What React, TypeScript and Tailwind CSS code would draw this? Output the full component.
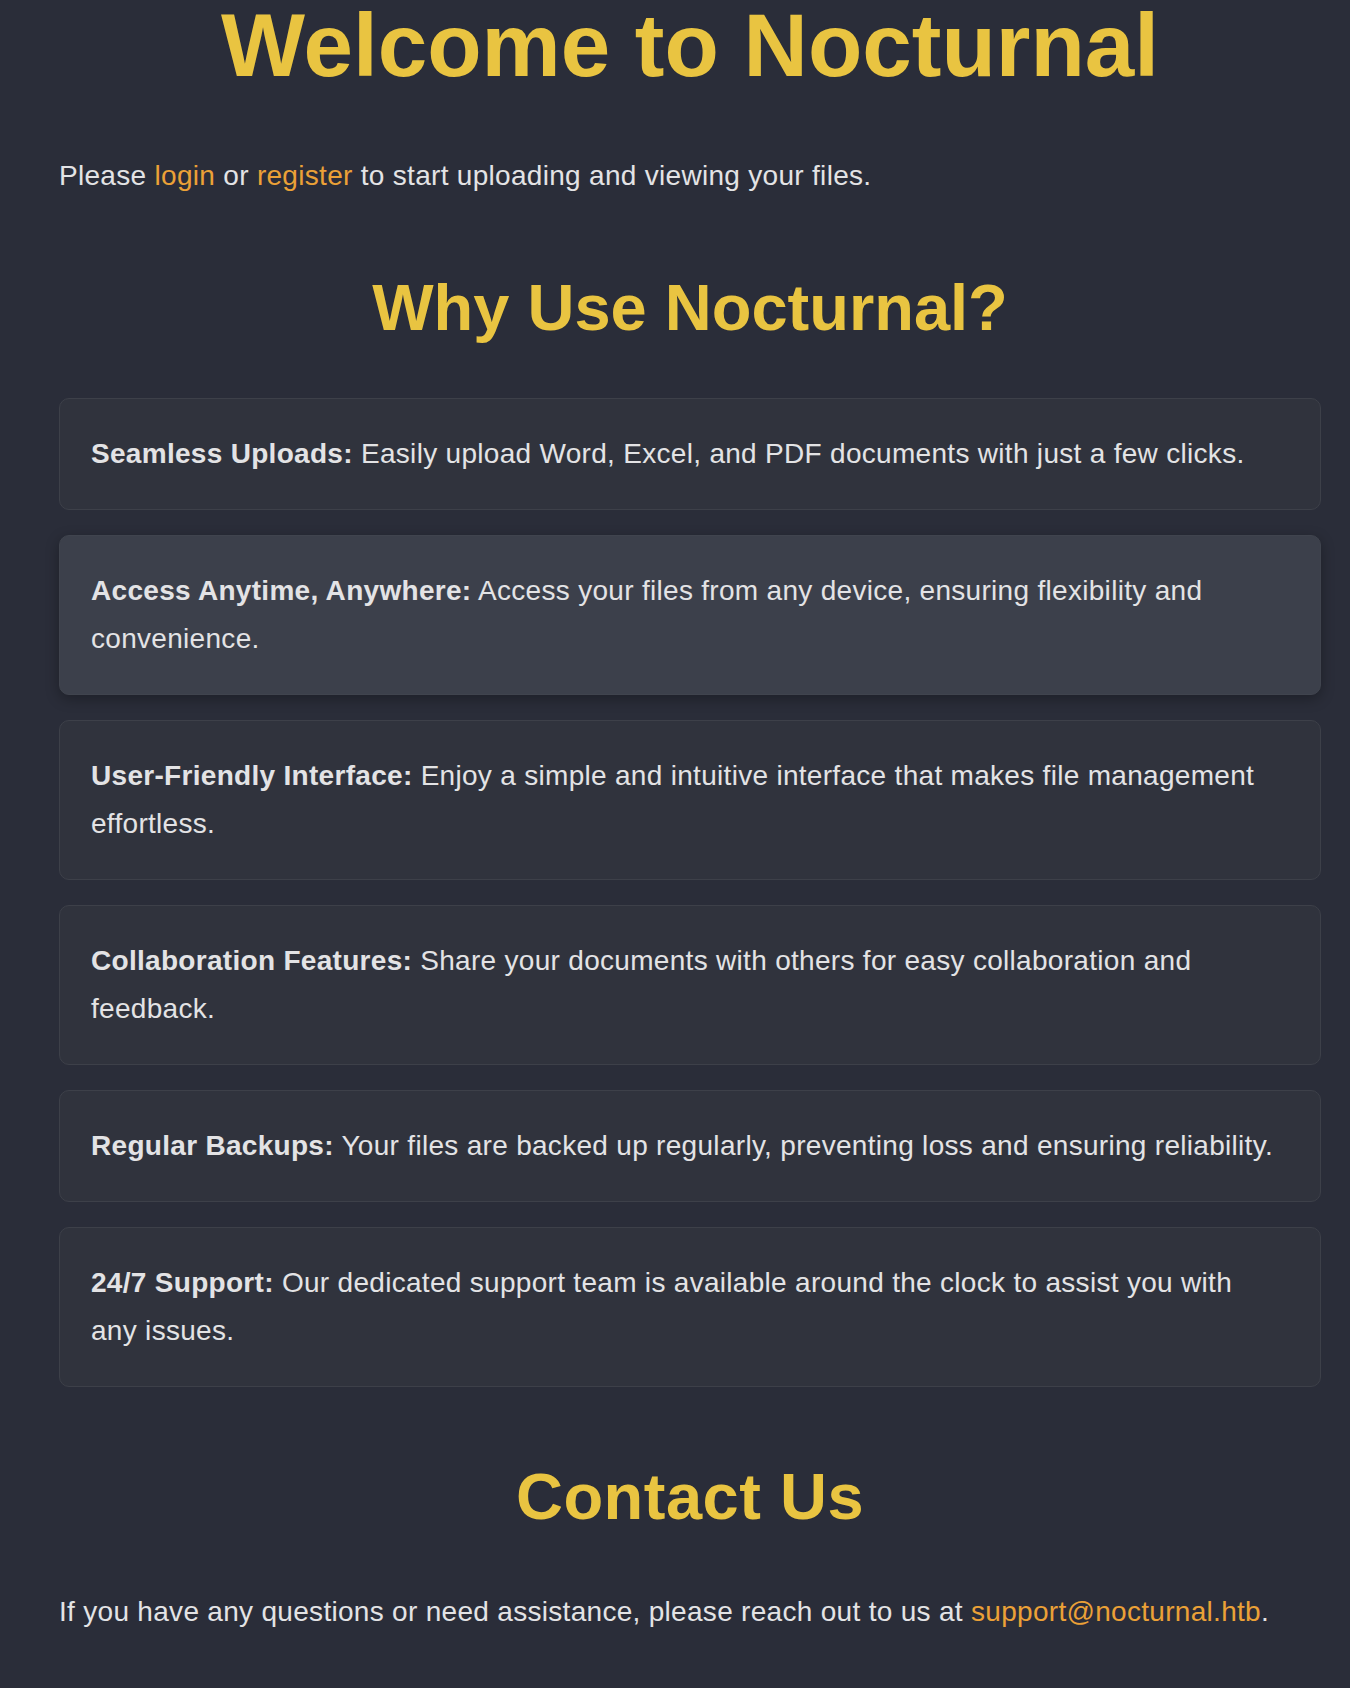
import React from "react";

type Feature = {
  title: string;
  text: string;
  active?: boolean;
};

const features: Feature[] = [
  {
    title: "Seamless Uploads:",
    text: "Easily upload Word, Excel, and PDF documents with just a few clicks.",
  },
  {
    title: "Access Anytime, Anywhere:",
    text: "Access your files from any device, ensuring flexibility and convenience.",
    active: true,
  },
  {
    title: "User-Friendly Interface:",
    text: "Enjoy a simple and intuitive interface that makes file management effortless.",
  },
  {
    title: "Collaboration Features:",
    text: "Share your documents with others for easy collaboration and feedback.",
  },
  {
    title: "Regular Backups:",
    text: "Your files are backed up regularly, preventing loss and ensuring reliability.",
  },
  {
    title: "24/7 Support:",
    text: "Our dedicated support team is available around the clock to assist you with any issues.",
  },
];

export default function App() {
  return (
    <div className="min-h-[1688px] bg-[#2a2d39] text-[#e3e3e5] font-['Liberation_Sans',Arial,sans-serif] text-[28px] leading-[48px] tracking-[0.3px]">
      <div className="ml-[59px] mr-[29px] pb-[50px]">
        <h1 className="text-center text-[89px] leading-[90px] font-bold tracking-normal text-[#e9c441]">
          Welcome to Nocturnal
        </h1>

        <p className="mt-[62px]">
          Please{" "}
          <a href="#" className="text-[#eba137]">
            login
          </a>{" "}
          or{" "}
          <a href="#" className="text-[#eba137]">
            register
          </a>{" "}
          to start uploading and viewing your files.
        </p>

        <h2 className="mt-[76px] text-center text-[65px] leading-[64px] font-bold tracking-normal text-[#e9c441]">
          Why Use Nocturnal?
        </h2>

        <div className="mt-[58px] flex flex-col gap-[25px]">
          {features.map((f) => (
            <div
              key={f.title}
              className={
                f.active
                  ? "rounded-[10px] border border-[#40444e] bg-[#3c404b] pl-[31px] pr-[40px] py-[31px] shadow-[0_4px_14px_rgba(0,0,0,0.3)]"
                  : "rounded-[10px] border border-[#3d4049] bg-[#30333d] pl-[31px] pr-[40px] py-[31px]"
              }
            >
              <strong className="font-bold">{f.title}</strong> {f.text}
            </div>
          ))}
        </div>

        <h2 className="mt-[78px] text-center text-[65px] leading-[64px] font-bold tracking-[0.5px] text-[#e9c441]">
          Contact Us
        </h2>

        <p className="mt-[59px]">
          If you have any questions or need assistance, please reach out to us at{" "}
          <a href="#" className="text-[#eba137]">
            support@nocturnal.htb
          </a>
          .
        </p>
      </div>
    </div>
  );
}
